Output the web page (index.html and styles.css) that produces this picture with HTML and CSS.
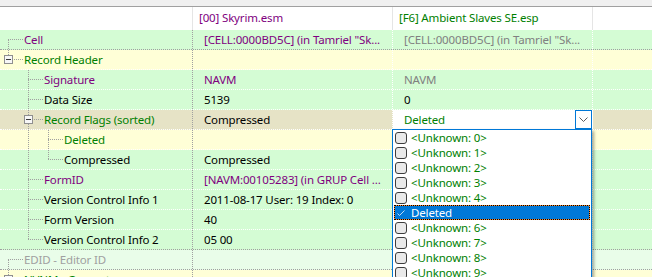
FILE: index.html
```html
<!DOCTYPE html>
<html>
<head>
<meta charset="utf-8">
<link rel="stylesheet" href="styles.css">
</head>
<body>
<div class="topband"></div>
<div class="tree">
  <div class="hdr">
    <div class="hc"></div>
    <div class="hc purple">[00] Skyrim.esm</div>
    <div class="hc green">[F6] Ambient Slaves SE.esp</div>
    <div class="hc last"></div>
  </div>

  <div class="row bg-green sep-gray">
    <div class="cell c0"><span class="conn first"></span><span class="lbl purple">Cell</span></div>
    <div class="cell purple">[CELL:0000BD5C] (in Tamriel "Sk...</div>
    <div class="cell gray">[CELL:0000BD5C] (in Tamriel "Sk...</div>
    <div class="cell last"></div>
  </div>

  <div class="row bg-yellow">
    <div class="cell c0"><span class="conn up"><span class="box minus"></span></span><span class="lbl green">Record Header</span></div>
    <div class="cell"></div>
    <div class="cell"></div>
    <div class="cell last"></div>
  </div>

  <div class="row bg-green">
    <div class="cell c0"><span class="guide"></span><span class="conn tee"></span><span class="lbl purple">Signature</span></div>
    <div class="cell purple">NAVM</div>
    <div class="cell gray">NAVM</div>
    <div class="cell last"></div>
  </div>

  <div class="row bg-green">
    <div class="cell c0"><span class="guide"></span><span class="conn tee"></span><span class="lbl">Data Size</span></div>
    <div class="cell">5139</div>
    <div class="cell">0</div>
    <div class="cell last"></div>
  </div>

  <div class="row bg-focus">
    <div class="cell c0"><span class="guide"></span><span class="conn tee"><span class="box minus"></span></span><span class="lbl green">Record Flags (sorted)</span></div>
    <div class="cell">Compressed</div>
    <div class="cell edit">
      <span class="green">Deleted</span>
      <span class="dropbtn"><svg width="9" height="6" viewBox="0 0 9 6"><polyline points="0.5,0.5 4.5,4.5 8.5,0.5" fill="none" stroke="#5a5a5a" stroke-width="1"/></svg></span>
      <div class="popup">
        <div class="item"><span class="chk"></span><span>&lt;Unknown: 0&gt;</span></div>
        <div class="item"><span class="chk"></span><span>&lt;Unknown: 1&gt;</span></div>
        <div class="item"><span class="chk"></span><span>&lt;Unknown: 2&gt;</span></div>
        <div class="item"><span class="chk"></span><span>&lt;Unknown: 3&gt;</span></div>
        <div class="item"><span class="chk"></span><span>&lt;Unknown: 4&gt;</span></div>
        <div class="item sel"><span class="tick"><svg width="12" height="12" viewBox="0 0 12 12"><polyline points="2.5,6.5 4.5,8.5 9.5,3.5" fill="none" stroke="#bcd8f2" stroke-width="1"/></svg></span><span>Deleted</span></div>
        <div class="item"><span class="chk"></span><span>&lt;Unknown: 6&gt;</span></div>
        <div class="item"><span class="chk"></span><span>&lt;Unknown: 7&gt;</span></div>
        <div class="item"><span class="chk"></span><span>&lt;Unknown: 8&gt;</span></div>
        <div class="item"><span class="chk"></span><span>&lt;Unknown: 9&gt;</span></div>
      </div>
    </div>
    <div class="cell last"></div>
  </div>

  <div class="row bg-yellow">
    <div class="cell c0"><span class="guide"></span><span class="guide pipe"></span><span class="conn tee"></span><span class="lbl green">Deleted</span></div>
    <div class="cell"></div>
    <div class="cell"></div>
    <div class="cell last"></div>
  </div>

  <div class="row bg-green">
    <div class="cell c0"><span class="guide"></span><span class="guide pipe"></span><span class="conn elbow"></span><span class="lbl">Compressed</span></div>
    <div class="cell">Compressed</div>
    <div class="cell"></div>
    <div class="cell last"></div>
  </div>

  <div class="row bg-green">
    <div class="cell c0"><span class="guide"></span><span class="conn tee"></span><span class="lbl purple">FormID</span></div>
    <div class="cell purple">[NAVM:00105283] (in GRUP Cell ...</div>
    <div class="cell"></div>
    <div class="cell last"></div>
  </div>

  <div class="row bg-green">
    <div class="cell c0"><span class="guide"></span><span class="conn tee"></span><span class="lbl">Version Control Info 1</span></div>
    <div class="cell">2011-08-17 User: 19 Index: 0</div>
    <div class="cell"></div>
    <div class="cell last"></div>
  </div>

  <div class="row bg-green">
    <div class="cell c0"><span class="guide"></span><span class="conn tee"></span><span class="lbl">Form Version</span></div>
    <div class="cell">40</div>
    <div class="cell"></div>
    <div class="cell last"></div>
  </div>

  <div class="row bg-green sep-gray">
    <div class="cell c0"><span class="guide"></span><span class="conn elbow"></span><span class="lbl">Version Control Info 2</span></div>
    <div class="cell">05 00</div>
    <div class="cell"></div>
    <div class="cell last"></div>
  </div>

  <div class="row bg-light sep-gray">
    <div class="cell c0"><span class="conn down"></span><span class="lbl dim">EDID - Editor ID</span></div>
    <div class="cell"></div>
    <div class="cell"></div>
    <div class="cell last"></div>
  </div>

  <div class="row bg-yellow">
    <div class="cell c0"><span class="conn up"><span class="box plus"></span></span><span class="lbl green">NVNM - Geometry</span></div>
    <div class="cell"></div>
    <div class="cell"></div>
    <div class="cell last"></div>
  </div>
</div>
</body>
</html>
```

FILE: styles.css
```css
* { box-sizing: border-box; }
html, body { margin: 0; padding: 0; }
body {
  width: 652px;
  height: 277px;
  overflow: hidden;
  background: #fff;
  font-family: "Noto Sans", "Open Sans", sans-serif;
  font-size: 11.5px;
  letter-spacing: -0.15px;
  color: #000;
}
.purple { color: #800080; }
.green { color: #008000; }
.gray { color: #808080; }
.dim { color: #a0a0a0; }

.topband {
  height: 7px;
  background: #f0f0f0;
  border-bottom: 1px solid #a0a0a0;
}
.tree { display: flex; flex-direction: column; }

.hdr {
  display: grid;
  grid-template-columns: 193px 200px 200px 1fr;
  height: 23px;
  background: #fff;
}
.hc {
  border-right: 1px solid #e5e5e5;
  padding-left: 6px;
  line-height: 22px;
  white-space: nowrap;
  overflow: hidden;
}
.hc.last { border-right: 0; }

.row {
  display: grid;
  grid-template-columns: 193px 200px 200px 1fr;
  height: 20px;
  border-bottom: 1px dotted #ffffff;
}
.row.sep-gray { border-bottom-color: #a0a0a0; }
.bg-green { background: #d4fcd4; }
.bg-yellow { background: #ffffd7; }
.bg-focus { background: #e6e3c6; }
.bg-light { background: #e9fde9; }

.cell {
  border-right: 1px dotted #ffffff;
  padding-left: 11px;
  line-height: 19px;
  height: 19px;
  white-space: nowrap;
  overflow: hidden;
}
.cell.last { border-right: 0; }
.cell.c0 {
  border-right-color: #a0a0a0;
  padding-left: 0;
  display: flex;
}

/* tree guides */
.guide, .conn { flex: none; height: 19px; }
.guide { width: 20px; }
.conn { width: 24px; display: flex; align-items: center; }
.lbl { padding-left: 0; }

.pipe {
  background: repeating-linear-gradient(to bottom, #a0a0a0 0 1px, transparent 1px 2px) 8px 0 / 1px 100% no-repeat;
}
.conn.tee {
  background:
    repeating-linear-gradient(to right, #a0a0a0 0 1px, transparent 1px 2px) 8px 9px / 15px 1px no-repeat,
    repeating-linear-gradient(to bottom, #a0a0a0 0 1px, transparent 1px 2px) 8px 0 / 1px 100% no-repeat;
}
.conn.elbow {
  background:
    repeating-linear-gradient(to right, #a0a0a0 0 1px, transparent 1px 2px) 8px 9px / 15px 1px no-repeat,
    repeating-linear-gradient(to bottom, #a0a0a0 0 1px, transparent 1px 2px) 8px 0 / 1px 10px no-repeat;
}
.conn.first, .conn.down {
  background:
    repeating-linear-gradient(to right, #a0a0a0 0 1px, transparent 1px 2px) 8px 9px / 15px 1px no-repeat,
    repeating-linear-gradient(to bottom, #a0a0a0 0 1px, transparent 1px 2px) 8px 10px / 1px 9px no-repeat;
}
.conn.up {
  background:
    repeating-linear-gradient(to right, #a0a0a0 0 1px, transparent 1px 2px) 8px 9px / 15px 1px no-repeat,
    repeating-linear-gradient(to bottom, #a0a0a0 0 1px, transparent 1px 2px) 8px 0 / 1px 10px no-repeat;
}
.box {
  width: 9px;
  height: 9px;
  margin-left: 4px;
  margin-top: -1px;
  border: 1px solid #8f8f8f;
  background: #f7f7f7;
}
.box.minus {
  background: linear-gradient(#3a3a3a, #3a3a3a) center / 5px 1px no-repeat, #f7f7f7;
}
.box.plus {
  background:
    linear-gradient(#3a3a3a, #3a3a3a) center / 5px 1px no-repeat,
    linear-gradient(#3a3a3a, #3a3a3a) center / 1px 5px no-repeat, #f7f7f7;
}

/* combo editor */
.cell.edit {
  background: #fff;
  display: flex;
  justify-content: space-between;
  overflow: visible;
  position: relative;
}
.dropbtn {
  width: 17px;
  height: 19px;
  border: 1px solid #0078d7;
  background: #fff;
  display: flex;
  align-items: center;
  justify-content: center;
}
.dropbtn svg { display: block; margin-top: 1px; }

.popup {
  position: absolute;
  left: -1px;
  top: 19px;
  width: 200px;
  height: 150px;
  border: 1px solid #0078d7;
  border-bottom: 0;
  background: #fff;
  box-shadow: 2px 2px 3px rgba(0, 0, 0, 0.35);
  z-index: 5;
  color: #008000;
  overflow: hidden;
}
.item {
  height: 15px;
  display: flex;
  align-items: center;
  padding-left: 2px;
  line-height: 15px;
  white-space: nowrap;
}
.chk, .tick {
  flex: none;
  width: 12px;
  height: 12px;
  margin-right: 4px;
}
.chk {
  border: 1px solid #3c3c3c;
  border-radius: 3px;
  background: #e9e9e9;
}
.tick svg { display: block; }
.item.sel {
  margin: 0 1px;
  padding-left: 0;
  color: #fff;
  border: 1px dotted #000;
  background:
    linear-gradient(#0078d7, #0078d7) padding-box,
    linear-gradient(#ff8728, #ff8728) border-box;
}
```
